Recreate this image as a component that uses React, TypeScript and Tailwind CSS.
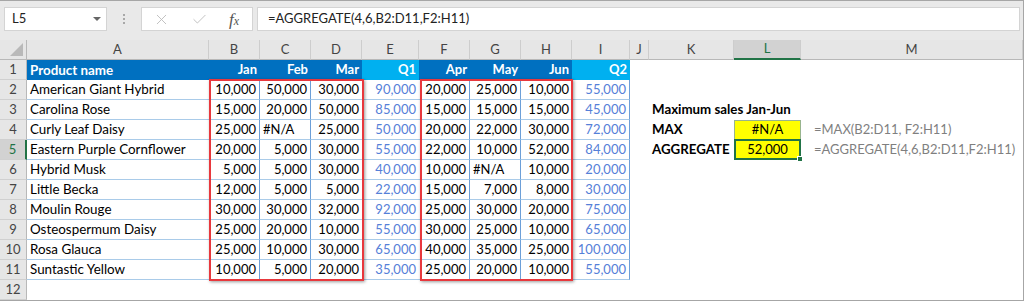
import { X, Check } from "lucide-react";

const months = ["Jan", "Feb", "Mar", "Q1", "Apr", "May", "Jun", "Q2"];

const rows = [
  ["American Giant Hybrid", "10,000", "50,000", "30,000", "90,000", "20,000", "25,000", "10,000", "55,000"],
  ["Carolina Rose", "15,000", "20,000", "50,000", "85,000", "15,000", "15,000", "15,000", "45,000"],
  ["Curly Leaf Daisy", "25,000", "#N/A", "25,000", "50,000", "20,000", "22,000", "30,000", "72,000"],
  ["Eastern Purple Cornflower", "20,000", "5,000", "30,000", "55,000", "22,000", "10,000", "52,000", "84,000"],
  ["Hybrid Musk", "5,000", "5,000", "30,000", "40,000", "10,000", "#N/A", "10,000", "20,000"],
  ["Little Becka", "12,000", "5,000", "5,000", "22,000", "15,000", "7,000", "8,000", "30,000"],
  ["Moulin Rouge", "30,000", "30,000", "32,000", "92,000", "25,000", "30,000", "20,000", "75,000"],
  ["Osteospermum Daisy", "25,000", "20,000", "10,000", "55,000", "30,000", "25,000", "10,000", "65,000"],
  ["Rosa Glauca", "25,000", "10,000", "30,000", "65,000", "40,000", "35,000", "25,000", "100,000"],
  ["Suntastic Yellow", "10,000", "5,000", "20,000", "35,000", "25,000", "20,000", "10,000", "55,000"],
];

const letters = ["A", "B", "C", "D", "E", "F", "G", "H", "I", "J", "K", "L", "M"];

// classes per column A..I for the data rows
const dataCls = [
  "pl-[3px] text-[13.4px] border-b border-[#a9cbe9]",
  "justify-end pr-[3px] border-b border-r border-b-[#a9cbe9] border-r-[#6c9fd8]",
  "justify-end pr-[3px] border-b border-r border-b-[#a9cbe9] border-r-[#6c9fd8]",
  "justify-end pr-[3px] border-b border-[#a9cbe9]",
  "justify-end pr-[3px] border-b border-[#a9cbe9] text-[#5580d8]",
  "justify-end pr-[3px] border-b border-r border-b-[#a9cbe9] border-r-[#6c9fd8]",
  "justify-end pr-[3px] border-b border-r border-b-[#a9cbe9] border-r-[#6c9fd8]",
  "justify-end pr-[3px] border-b border-[#a9cbe9]",
  "justify-end pr-[3px] border-b border-r border-b-[#a9cbe9] border-r-[#6c9fd8] text-[#5580d8]",
];

const headCls = [
  "pl-[3px] text-[13.4px] bg-[#0070c0]",
  "justify-end pr-[3px] bg-[#0070c0]",
  "justify-end pr-[3px] bg-[#0070c0]",
  "justify-end pr-[3px] bg-[#0070c0]",
  "justify-end pr-[3px] bg-[#00b0f0]",
  "justify-end pr-[3px] bg-[#0070c0]",
  "justify-end pr-[3px] bg-[#0070c0]",
  "justify-end pr-[3px] bg-[#0070c0]",
  "justify-end pr-[3px] bg-[#00b0f0]",
];

const RowNum = ({ n }: { n: number }) => (
  <div
    className={`flex items-center justify-center border-b border-[#d0d0d0] ${
      n === 5
        ? "bg-[#d2d2d2] border-r-2 border-r-[#217346] text-[#217346]"
        : "bg-[#e6e6e6] border-r border-r-[#b8b8b8] text-[#444]"
    }`}
  >
    {n}
  </div>
);

const Side = ({ r }: { r: number }) => {
  // columns J..M for row r
  if (r === 3)
    return (
      <>
        <div />
        <div className="flex items-center pl-[3px] font-bold text-[13.3px] whitespace-nowrap">Maximum sales Jan-Jun</div>
        <div />
        <div />
      </>
    );
  if (r === 4)
    return (
      <>
        <div />
        <div className="flex items-center pl-[3px] font-bold text-[13.3px]">MAX</div>
        <div className="flex items-center justify-center bg-[#ffff00] border border-[#98b48e]">#N/A</div>
        <div className="flex items-center pl-[13px] text-[#7f7f7f] whitespace-nowrap">=MAX(B2:D11, F2:H11)</div>
      </>
    );
  if (r === 5)
    return (
      <>
        <div />
        <div className="flex items-center pl-[3px] font-bold text-[13.3px]">AGGREGATE</div>
        <div className="relative flex items-center justify-center bg-[#ffff00] border-2 border-[#217346] -mt-px">
          52,000
          <span className="absolute -right-[4px] -bottom-[4px] w-[6px] h-[6px] bg-[#217346] border border-white" />
        </div>
        <div className="flex items-center pl-[13px] text-[#7f7f7f] whitespace-nowrap">=AGGREGATE(4,6,B2:D11,F2:H11)</div>
      </>
    );
  return (
    <>
      <div />
      <div />
      <div />
      <div />
    </>
  );
};

const App = () => {
  return (
    <div className="w-[1024px] h-[301px] overflow-hidden bg-white border-t border-r border-b border-[#a6a6a6] text-[13px] text-black font-[family-name:Lato,sans-serif]">
      {/* Formula bar */}
      <div className="h-[39px] bg-[#e9e9e9] flex items-start pt-[6px] pl-[4px] pr-[3px]">
        <div className="w-[103px] h-[24px] bg-white border border-[#d4d4d4] flex items-center justify-between pl-[7px] pr-[5px] text-[#222]">
          <span>L5</span>
          <span className="w-0 h-0 border-l-[4px] border-r-[4px] border-t-[4px] border-l-transparent border-r-transparent border-t-[#666]" />
        </div>
        <div className="w-[34px] h-[24px] flex flex-col items-center justify-center gap-[2px]">
          <span className="w-[2px] h-[2px] bg-[#a8a8a8]" />
          <span className="w-[2px] h-[2px] bg-[#a8a8a8]" />
          <span className="w-[2px] h-[2px] bg-[#a8a8a8]" />
        </div>
        <div className="w-[112px] h-[24px] bg-white border border-[#d4d4d4] flex items-center pl-[11px] gap-[21px] text-[#bdbdbd]">
          <X size={17} strokeWidth={1.3} />
          <Check size={17} strokeWidth={1.3} />
          <span className="font-[family-name:'Liberation_Serif',serif] italic text-[17px] text-[#555] leading-none">
            f<span className="text-[12px]">x</span>
          </span>
        </div>
        <div className="ml-[4px] flex-1 h-[24px] bg-white border border-[#d4d4d4] flex items-center pl-[10px] text-[#222]">
          =AGGREGATE(4,6,B2:D11,F2:H11)
        </div>
      </div>

      {/* Grid */}
      <div className="relative">
        <div className="grid grid-cols-[27px_182px_51px_51px_51px_57px_51px_51px_51px_58px_19px_85px_67px_1fr] auto-rows-[20px]">
          {/* column headers */}
          <div className="bg-[#e6e6e6] border-r border-b border-[#b8b8b8] flex items-end justify-end pr-[3px] pb-[3px]">
            <svg width="13" height="13" viewBox="0 0 13 13">
              <path d="M13 0 L13 13 L0 13 Z" fill="#b9b9b9" />
            </svg>
          </div>
          {letters.map((l) => (
            <div
              key={l}
              className={`flex items-center justify-center border-r border-r-[#cdcdcd] ${
                l === "L"
                  ? "bg-[#d2d2d2] border-b-2 border-b-[#217346] text-[#217346]"
                  : "bg-[#e6e6e6] border-b border-b-[#b8b8b8] text-[#444]"
              }`}
            >
              {l}
            </div>
          ))}

          {/* row 1 */}
          <RowNum n={1} />
          {["Product name", ...months].map((t, i) => (
            <div key={t} className={`flex items-center text-white font-bold ${headCls[i]}`}>
              {t}
            </div>
          ))}
          <Side r={1} />

          {/* rows 2..11 */}
          {rows.map((row, ri) => (
            <div key={ri} className="contents">
              <RowNum n={ri + 2} />
              {row.map((v, ci) => (
                <div
                  key={ci}
                  className={`flex items-center whitespace-nowrap ${dataCls[ci]} ${
                    v === "#N/A" ? "!justify-start pl-[3px]" : ""
                  }`}
                >
                  {v}
                </div>
              ))}
              <Side r={ri + 2} />
            </div>
          ))}

          {/* row 12 */}
          <RowNum n={12} />
          {letters.map((l) => (
            <div key={l} />
          ))}
        </div>

        {/* red highlight boxes */}
        <div className="absolute left-[209px] top-[39px] w-[155px] h-[202px] border-2 border-[#e8383d] shadow-[1px_1px_3px_rgba(0,0,0,0.4)]" />
        <div className="absolute left-[420px] top-[39px] w-[153px] h-[202px] border-2 border-[#e8383d] shadow-[1px_1px_3px_rgba(0,0,0,0.4)]" />
      </div>
    </div>
  );
};

export default App;
